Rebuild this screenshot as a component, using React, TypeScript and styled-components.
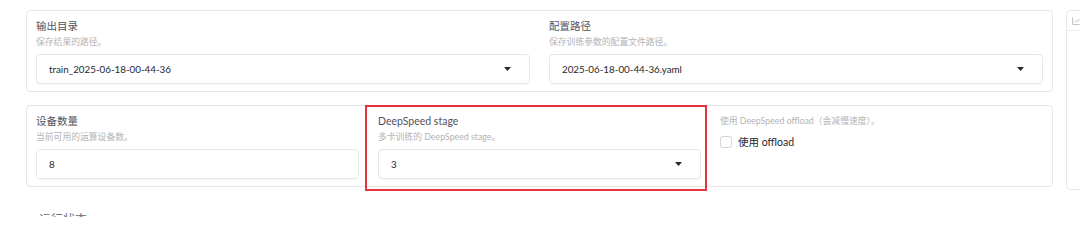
import styled, { createGlobalStyle } from "styled-components";

const GlobalStyle = createGlobalStyle`
  html, body {
    margin: 0;
    padding: 0;
    background: #ffffff;
    overflow: hidden;
  }
  body {
    font-family: Lato, "Noto Sans CJK SC", "Noto Sans", sans-serif;
    -webkit-font-smoothing: antialiased;
  }
`;

const Page = styled.div`
  width: 1080px;
  height: 217px;
  overflow: hidden;
  display: flex;
  align-items: flex-start;
  gap: 13px;
  padding: 10px 0 0 26px;
  box-sizing: border-box;
`;

const Main = styled.div`
  width: 1027px;
  flex-shrink: 0;
  display: flex;
  flex-direction: column;
  gap: 13px;
`;

const Panel = styled.div<{ cols: number }>`
  display: grid;
  grid-template-columns: repeat(${(p) => p.cols}, 1fr);
  column-gap: 19px;
  border: 1px solid #e7e7e9;
  border-radius: 4px;
  padding: 6px 9px 7px 9px;
  background: #fff;
`;

const Field = styled.div`
  position: relative;
  display: flex;
  flex-direction: column;
  min-width: 0;
`;

const Highlight = styled.div`
  position: absolute;
  top: -7px;
  left: -13px;
  right: -6px;
  bottom: -12px;
  border: 2px solid #e3353b;
  pointer-events: none;
`;

const Label = styled.div`
  font-size: 10.5px;
  line-height: 18px;
  color: #52525b;
`;

const Desc = styled.div<{ tall?: boolean }>`
  font-size: 8.8px;
  line-height: ${(p) => (p.tall ? "18px" : "14px")};
  color: #b3b3b8;
  white-space: nowrap;
`;

const Select = styled.div`
  margin-top: 5px;
  height: 30px;
  box-sizing: border-box;
  border: 1px solid #e7e7e9;
  border-radius: 4px;
  box-shadow: 0 1px 1px rgba(0, 0, 0, 0.03);
  display: flex;
  align-items: center;
  justify-content: space-between;
  padding: 0 18px 0 12px;
  font-size: 9.8px;
  color: #27272a;
`;

const Arrow = styled.svg`
  width: 7px;
  height: 4px;
  fill: #27272a;
`;

const CheckRow = styled.label`
  margin-top: 2px;
  display: flex;
  align-items: center;
  gap: 6px;
  font-size: 10.5px;
  line-height: 20px;
  color: #27272a;
`;

const Box = styled.span`
  width: 12px;
  height: 12px;
  box-sizing: border-box;
  border: 1px solid #d4d4d8;
  border-radius: 3px;
  background: #fff;
`;

const SectionTitle = styled.div`
  margin-top: 12px;
  font-size: 12px;
  line-height: 16px;
  color: #6b6b73;
  padding-left: 4px;
`;

const SidePanel = styled.div`
  width: 260px;
  height: 180px;
  flex-shrink: 0;
  border: 1px solid #e7e7e9;
  border-radius: 4px;
  box-sizing: border-box;
`;

const SideHeader = styled.div`
  height: 19px;
  border-bottom: 1px solid #ededf0;
  display: flex;
  align-items: center;
  padding-left: 5px;
`;

function Dropdown({ value }: { value: string }) {
  return (
    <Select>
      <span>{value}</span>
      <Arrow viewBox="0 0 7 4">
        <path d="M0 0h7L3.5 4z" />
      </Arrow>
    </Select>
  );
}

function App() {
  return (
    <>
      <GlobalStyle />
      <Page>
        <Main>
          <Panel cols={2}>
            <Field>
              <Label>输出目录</Label>
              <Desc>保存结果的路径。</Desc>
              <Dropdown value="train_2025-06-18-00-44-36" />
            </Field>
            <Field>
              <Label>配置路径</Label>
              <Desc>保存训练参数的配置文件路径。</Desc>
              <Dropdown value="2025-06-18-00-44-36.yaml" />
            </Field>
          </Panel>
          <Panel cols={3}>
            <Field>
              <Label>设备数量</Label>
              <Desc>当前可用的运算设备数。</Desc>
              <Select>
                <span>8</span>
              </Select>
            </Field>
            <Field>
              <Highlight />
              <Label>DeepSpeed stage</Label>
              <Desc>多卡训练的 DeepSpeed stage。</Desc>
              <Dropdown value="3" />
            </Field>
            <Field>
              <Desc tall>使用 DeepSpeed offload（会减慢速度）。</Desc>
              <CheckRow>
                <Box />
                使用 offload
              </CheckRow>
            </Field>
          </Panel>
          <SectionTitle>▸ 运行状态</SectionTitle>
        </Main>
        <SidePanel>
          <SideHeader>
            <svg width="8" height="8" viewBox="0 0 8 8" fill="none" stroke="#c4c4c8" strokeWidth="1">
              <path d="M0.5 0.5v7h7" />
              <path d="M2 5.5l2-2 1.5 1.5L7.5 2" />
            </svg>
          </SideHeader>
        </SidePanel>
      </Page>
    </>
  );
}

export default App;
